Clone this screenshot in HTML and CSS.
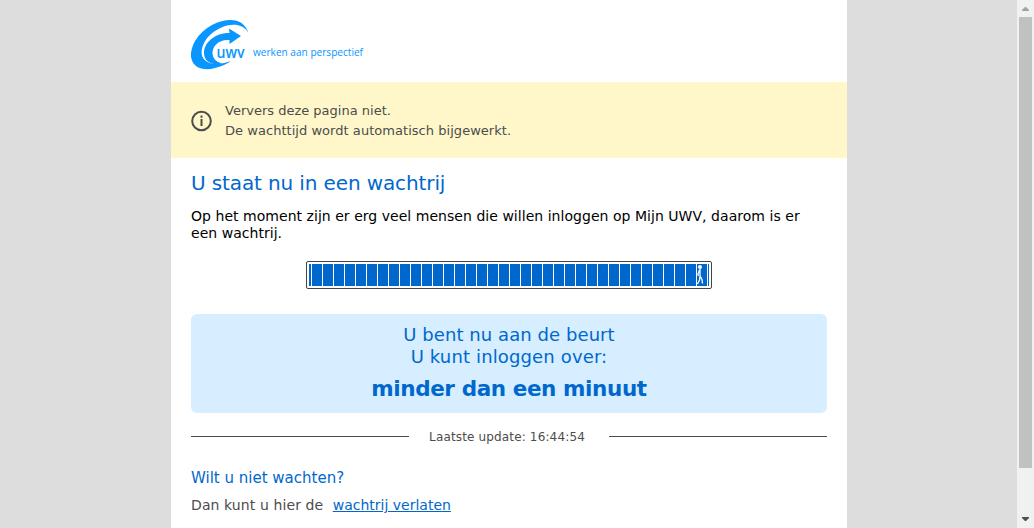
FILE: index.html
```html
<!DOCTYPE html>
<html lang="nl">
<head>
<meta charset="utf-8">
<title>UWV wachtrij</title>
<link rel="stylesheet" href="styles.css">
</head>
<body>
<div class="viewport">
  <main class="page">
    <header class="header">
      <svg class="logo" width="220" height="54" viewBox="0 0 220 54">
        <path class="logo-mark" d="M57.300 13C53 -2 37 -3 21 5C6 13 -1 27 0 37C2 49 14 51 24 48Q33 46 40 41Q30 45 21 43.500C8 41 8 28 17 17C30 3 51 0 57.300 13Z"/>
        <path class="logo-mark" d="M38 8.500L50 16L38.500 24V20C28 19 21 26 21.500 34Q22 41 31 43.500C20 46 13 41 13 33C13 22 25 12.500 38.500 13Z"/>
        <text class="logo-name" x="25.500" y="38" textLength="28" lengthAdjust="spacingAndGlyphs">uwv</text>
        <text class="logo-tag" x="62" y="36" textLength="110" lengthAdjust="spacingAndGlyphs">werken aan perspectief</text>
      </svg>
    </header>
    <section class="notice">
      <svg class="info" width="22" height="22" viewBox="0 0 22 22">
        <circle cx="10.500" cy="11" r="9.300"/>
        <path d="M10.500 9V16M10.500 5.500V7.800"/>
      </svg>
      <p class="notice-text">Ververs deze pagina niet.<br><span class="notice-second">De wachttijd wordt automatisch bijgewerkt.</span></p>
    </section>
    <section class="content">
      <h1 class="title">U staat nu in een wachtrij</h1>
      <p class="intro">Op het moment zijn er erg veel mensen die willen inloggen op Mijn UWV, daarom is er<br>een wachtrij.</p>
      <div class="progress">
        <div class="progress-fill">
          <svg class="walker" width="10" height="22" viewBox="0 0 10 22">
            <circle cx="4" cy="3" r="2"/>
            <path d="M4 5V12L6 15.500L6.500 19.500M4 12L3.500 16L1.500 20M3.500 6L2 10L2.200 12"/>
          </svg>
        </div>
      </div>
      <div class="status">
        <p class="status-line">U bent nu aan de beurt</p>
        <p class="status-line status-second">U kunt inloggen over:</p>
        <p class="status-time">minder dan een minuut</p>
      </div>
      <div class="update"><span class="update-text">Laatste update: 16:44:54</span></div>
      <h2 class="leave-title">Wilt u niet wachten?</h2>
      <p class="leave"><span class="leave-lead">Dan kunt u hier de</span> <a class="leave-link" href="#">wachtrij verlaten</a></p>
    </section>
  </main>
  <div class="scrollbar">
    <svg class="arrow arrow-up" width="17" height="17" viewBox="0 0 17 17"><path d="M5 11H12V10L9 7H8L5 10Z"/></svg>
    <div class="thumb"></div>
    <svg class="arrow" width="17" height="17" viewBox="0 0 17 17"><path d="M5 6H12V7L9 10H8L5 7Z"/></svg>
  </div>
</div>
</body>
</html>
```
FILE: styles.css
```css
* { box-sizing: border-box; }
body { margin: 0; background: #ddd; font-family: Verdana, "DejaVu Sans", sans-serif; color: #4c4c4c; overflow: hidden; }
h1, h2, p { margin: 0; font-weight: normal; white-space: nowrap; }
.viewport { display: flex; justify-content: space-between; height: 528px; padding-left: 171px; }
.page { width: 676px; height: 528px; background: #fff; overflow: hidden; }
.header { height: 82px; padding: 20px 20px 0; }
.logo { display: block; overflow: visible; }
.logo-mark { fill: #0a96ff; }
.logo-name { font: 600 16px "Open Sans", sans-serif; fill: #0a96ff; stroke: #fff; stroke-width: 2px; paint-order: stroke; }
.logo-tag { font: 11px "Open Sans", sans-serif; fill: #0a96ff; }
.notice { display: flex; align-items: center; gap: 12px; height: 76px; padding: 2px 20px 0; background: #fff7ca; }
.info { fill: none; stroke: #4c4c4c; stroke-width: 2; }
.notice-text { font-size: 13px; line-height: 20px; }
.notice-second { letter-spacing: 0.04px; }
.content { padding: 13px 20px 0; }
.title { height: 37px; font-size: 20px; line-height: 24px; letter-spacing: -0.12px; color: #0068cd; }
.intro { height: 53px; font-size: 14px; line-height: 17px; letter-spacing: 0.037px; color: #000; }
.progress { width: 406px; height: 28px; margin: 0 auto; padding: 2px; border: 1px solid #444; border-radius: 2px; }
.progress-fill { display: flex; justify-content: flex-end; height: 22px; padding-right: 3px; background: repeating-linear-gradient(to right, #0068cd 0 10px, #fff 10px 11px) -8px 0 / 440px 22px; }
.walker { fill: #fff; stroke: #fff; stroke-width: 1.3; }
.walker circle { stroke: none; }
.walker path { fill: none; }
.status { height: 99px; margin-top: 25px; padding-top: 10px; border-radius: 6px; background: #d6eeff; color: #0068cd; text-align: center; }
.status-line { font-size: 18px; line-height: 22px; letter-spacing: 0.07px; }
.status-second { letter-spacing: 0.14px; }
.status-time { margin-top: 7px; font-size: 21.500px; line-height: 28px; font-weight: bold; letter-spacing: -0.4px; }
.update { display: flex; align-items: center; height: 19px; margin-top: 14px; font-size: 12px; letter-spacing: 0.15px; }
.update::before, .update::after { content: ""; flex: 1; height: 1px; background: #4c4c4c; }
.update-text { padding: 0 24px 0 20px; }
.leave-title { margin-top: 22px; font-size: 15px; line-height: 20px; color: #0068cd; }
.leave { margin-top: 7px; font-size: 14px; line-height: 20px; }
.leave-lead { letter-spacing: 0.1px; }
.leave-link { margin-left: 5px; color: #0068cd; }
.scrollbar { display: flex; flex-direction: column; width: 17px; background: #f1f1f1; }
.thumb { flex: none; width: 13px; height: 451px; margin: 0 2px 43px; background: #c1c1c1; }
.arrow { display: block; flex: none; fill: #505050; }
.arrow-up { fill: #a3a3a3; }
```
